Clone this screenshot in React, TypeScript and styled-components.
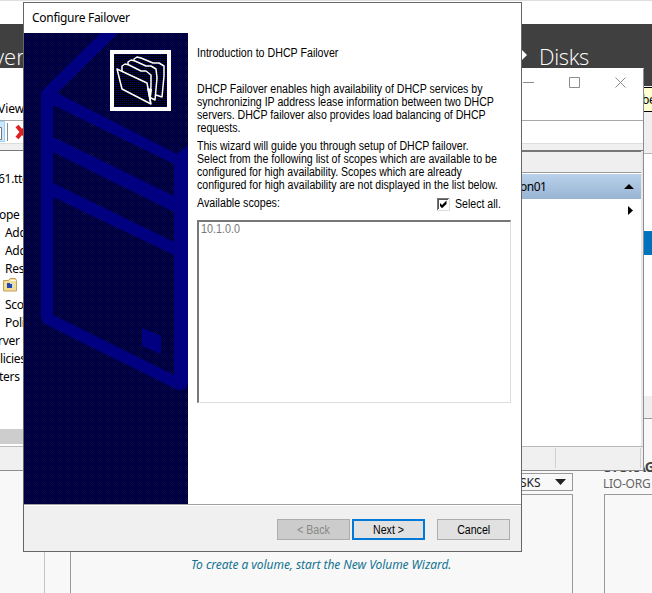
import React from "react";
import styled, { createGlobalStyle } from "styled-components";

const Global = createGlobalStyle`
  *{box-sizing:border-box}
  html,body{margin:0;padding:0;overflow:hidden}
  body{width:652px;height:593px;background:#f8f8f8;color:#000;font-family:"Noto Sans","Open Sans",sans-serif;font-size:12px}
`;

const Desktop = styled.main`
  position: relative;
  width: 652px;
  height: 593px;
  overflow: hidden;
`;

/* ---------- Server Manager behind ---------- */
const Manager = styled.section`
  display: flex;
  flex-direction: column;
  height: 593px;
`;
const ManagerCaption = styled.div`
  height: 24px;
  border-top: 1px solid #dedede;
  background: #fff;
`;
const Breadcrumb = styled.header`
  display: flex;
  height: 62px;
  padding-top: 13px;
  background: #404040;
  color: #fff;
  font: 300 22px/38px "Open Sans", sans-serif;
  white-space: nowrap;
`;
const CrumbLeft = styled.span`
  width: 527px;
  margin-left: -6px;
`;
const CrumbArrow = styled.svg`
  width: 7px;
  height: 10px;
  margin-top: 13px;
`;
const CrumbRight = styled.span`
  margin-left: 11px;
  letter-spacing: -0.35px;
`;
const TipStrip = styled.div`
  display: flex;
  justify-content: flex-end;
  height: 68px;
  background: #efefef;
  border-bottom: 1px solid #b5b5b5;
`;
const Tip = styled.span`
  width: 9px;
  height: 25px;
  margin-top: 1px;
  border: solid #000;
  border-width: 1px 0;
  background: #ffffd0;
  line-height: 24px;
  letter-spacing: -0.5px;
  text-indent: -1px;
  overflow: hidden;
`;
const TableArea = styled.div`
  display: flex;
  flex-direction: column;
  align-items: flex-end;
  height: 265px;
  background: #fff;
  border-bottom: 1px solid #999;
`;
const SelectedRow = styled.div`
  width: 30px;
  height: 24px;
  margin-top: 77px;
  background: #0072bc;
`;
const ScrollStrip = styled.div`
  width: 100%;
  height: 22px;
  margin-top: auto;
  background: #eee;
`;
const Tiles = styled.div`
  flex: 1;
  display: grid;
  grid-template-columns: 45px 25px 503px 31px 1fr;
  padding-top: 36px;
`;
const Gutter = styled.div`
  border-right: 1px solid #c4c4c4;
`;
const Tile = styled.div`
  display: flex;
  flex-direction: column;
`;
const TileHead = styled.div`
  display: flex;
  align-items: flex-end;
  justify-content: flex-end;
  height: 39px;
  padding-bottom: 3px;
`;
const TasksButton = styled.button`
  display: flex;
  align-items: center;
  justify-content: space-between;
  width: 80px;
  height: 18px;
  padding: 0 6px 0 26px;
  border: 1px solid #999;
  background: #f8f8f8;
  color: #222;
  font: 12px "Noto Sans", sans-serif;
`;
const Pane = styled.div`
  flex: 1;
  border: 1px solid #999;
  border-bottom: 0;
  padding: 61px 0 0 120px;
  color: #127391;
  font: italic 12px/18px "Noto Sans", sans-serif;
  letter-spacing: -0.05px;
  white-space: nowrap;
`;
const StorageTitle = styled.div`
  height: 19px;
  margin-top: 3px;
  color: #444;
  font: bold 14px/18px "Noto Sans", sans-serif;
  letter-spacing: -0.9px;
`;
const StorageSub = styled.div`
  height: 17px;
  margin-left: -1px;
  color: #666;
  line-height: 14px;
  letter-spacing: -0.25px;
  white-space: nowrap;
`;

/* ---------- DHCP console ---------- */
const Console = styled.section`
  position: absolute;
  left: -1px;
  top: 68px;
  width: 645px;
  height: 403px;
  display: flex;
  flex-direction: column;
  background: #fff;
  border: 1px solid #8d8d8d;
  border-top-color: #fff;
`;
const ConsoleCaption = styled.div`
  display: flex;
  align-items: center;
  gap: 35px;
  height: 27px;
  padding-left: 523px;
`;
const CaptionIcon = styled.svg`
  width: 11px;
  height: 11px;
  fill: none;
  stroke: #8b8b8b;
`;
const MenuBar = styled.div`
  height: 25px;
  padding-top: 1px;
  border-bottom: 1px solid #aaa;
  line-height: 24px;
  text-indent: -2px;
`;
const Toolbar = styled.div`
  display: flex;
  align-items: center;
  height: 23px;
  border-bottom: 1px solid #ddd;
`;
const ToolIcon = styled.svg`
  width: 24px;
  height: 22px;
`;
const ToolGap = styled.div`
  height: 7px;
  background: #f0f0f0;
  border-bottom: 1px solid #777;
`;
const ConsoleBody = styled.div`
  flex: 1;
  display: grid;
  grid-template-columns: 1fr 121px;
  border-right: 2px solid #e8e8e8;
`;
const Tree = styled.ul`
  list-style: none;
  margin: 0;
  padding: 19px 0 0;
`;
const TreeItem = styled.li<{ $shift: number }>`
  height: 18px;
  padding-left: ${(p) => Math.max(p.$shift, 0)}px;
  text-indent: ${(p) => Math.min(p.$shift, 0)}px;
  line-height: 18px;
  letter-spacing: -0.3px;
  white-space: pre;
`;
const TreeScroll = styled.div`
  height: 15px;
  margin-top: 43px;
  background: #cdcdcd;
`;
const Actions = styled.aside``;
const ActionsTitle = styled.div`
  height: 22px;
  background: #efefef;
  border-top: 1px solid #777;
  border-bottom: 1px solid #999;
`;
const ActionsGroup = styled.div`
  display: flex;
  align-items: center;
  justify-content: space-between;
  height: 25px;
  margin-top: 1px;
  padding: 0 7px 0 0;
  background: linear-gradient(#b9d1ea, #98b4d4);
  letter-spacing: -0.5px;
`;
const MoreArrow = styled.svg`
  display: block;
  width: 5px;
  height: 9px;
  margin: 7px 8px 0 auto;
`;
const StatusBar = styled.div`
  display: flex;
  height: 24px;
  border-top: 1px solid #bbb;
  background: #f0f0f0;
  padding: 1px 2px 2px 0;
`;
const StatusCell = styled.div<{ $w: number }>`
  width: ${(p) => p.$w}px;
  border-right: 1px solid #d0d0d0;
`;

/* ---------- Wizard ---------- */
const Wizard = styled.section`
  position: absolute;
  left: 23px;
  top: 2px;
  width: 499px;
  height: 550px;
  display: flex;
  flex-direction: column;
  border: 1px solid #666;
  background: #fff;
  font: 12px/13px "Liberation Sans", sans-serif;
`;
const WizardTitle = styled.h1`
  height: 30px;
  margin: 0;
  padding-left: 8px;
  font: 12px/30px "Noto Sans", sans-serif;
  letter-spacing: -0.29px;
`;
const WizardBody = styled.div`
  display: flex;
  height: 471px;
`;
const Watermark = styled.svg`
  width: 164px;
  height: 471px;
  flex: none;
`;
const Page = styled.div`
  width: 323px;
  padding: 14px 0 0 9px;
  white-space: nowrap;
`;
const Narrow = styled.span<{ $by?: number }>`
  display: inline-block;
  transform: scaleX(${(p) => p.$by ?? 0.882});
  transform-origin: left;
`;
const Line = styled(Narrow)<{ $gap?: number }>`
  display: block;
  width: max-content;
  height: 13px;
  margin-top: ${(p) => p.$gap ?? 0}px;
`;
const ScopeHead = styled.div`
  display: flex;
  height: 14px;
  margin-top: 5px;
`;
const ScopeLabel = styled.div`
  width: 240px;
`;
const CheckLabel = styled.label`
  display: flex;
  align-items: center;
  gap: 5px;
`;
const Tick = styled.svg`
  width: 13px;
  height: 13px;
`;
const ScopeList = styled.div`
  width: 314px;
  height: 183px;
  margin-top: 9px;
  padding: 1px 2px;
  border: solid;
  border-width: 2px 1px 1px 2px;
  border-color: #777 #ddd #ddd #777;
  color: #777;
`;
const WizardFooter = styled.footer`
  flex: 1;
  display: flex;
  align-items: flex-start;
  justify-content: flex-end;
  padding: 14px 11px 0 0;
  background: #f0f0f0;
  border-top: 1px solid #a0a0a0;
  box-shadow: inset 0 1px #fff;
`;
const Button = styled.button<{ $kind?: "default" | "off" }>`
  width: 73px;
  height: 21px;
  padding: 1px 0 0;
  margin-left: ${(p) => (p.$kind === "default" ? 2 : 12)}px;
  border: ${(p) => (p.$kind === "default" ? "2px solid #0078d7" : "1px solid #adadad")};
  background: ${(p) => (p.$kind === "off" ? "#ccc" : "#e1e1e1")};
  color: ${(p) => (p.$kind === "off" ? "#888" : "#000")};
  font: 12px "Liberation Sans", sans-serif;
`;
const ButtonText = styled(Narrow)`
  transform-origin: center;
`;

const tree = [
  { text: "61.tto", shift: -2 },
  { text: "", shift: 0 },
  { text: "ope [", shift: -1 },
  { text: "Add", shift: 5 },
  { text: "Add", shift: 5 },
  { text: "Res", shift: 5 },
  { text: "folder", shift: 3 },
  { text: "Sco", shift: 5 },
  { text: "Poli", shift: 5 },
  { text: "rver O", shift: -2 },
  { text: "licies", shift: 0 },
  { text: "ters", shift: -1 },
];

const FolderIcon = () => (
  <svg width="14" height="14" viewBox="0 0 14 14">
    <path d="M.5 2.500h5l1.500-2h5.500l1 2v10.500h-13z" fill="#f3dc94" stroke="#c2a057" />
    <path d="M7.500 2.500h5" stroke="#fff" />
    <path d="M4 5h6v5H4z" fill="#c3dcf8" />
    <path d="M4 5h3v5H4zM6 6h3v4H6z" fill="#2448b0" />
  </svg>
);

const checker = [0, 1, 2, 3, 4, 5, 6, 7].flatMap((y) =>
  [0, 2, 4, 6].map((x) => ({ x: x + ((y + 1) % 2), y })),
);

const WizardWatermark = () => (
  <Watermark viewBox="0 0 164 471">
    <defs>
      <pattern id="dither" width="8" height="8" patternUnits="userSpaceOnUse">
        <rect width="8" height="8" fill="#000" />
        {checker.map((c) => (
          <rect key={`${c.x}-${c.y}`} x={c.x} y={c.y} width="1" height="1" fill="#000084" />
        ))}
      </pattern>
      <pattern id="sparse" width="8" height="8" patternUnits="userSpaceOnUse">
        <rect width="8" height="8" fill="#000" />
        {checker.filter((c) => c.y % 2 === 1).map((c) => (
          <rect key={`${c.x}-${c.y}`} x={c.x} y={c.y} width="1" height="1" fill="#000084" />
        ))}
      </pattern>
    </defs>
    <rect width="164" height="471" fill="url(#dither)" />
    <path fill="#000080" d="M77 0h17L33 60 153 121l11-9v239q-3 7-10 6L21 291q-4-3-4-8V61q0-3 3-5z" />
    <path
      fill="url(#dither)"
      d="M29 72 150 131v32L29 104zM29 119 150 179v30L29 150zM29 164 150 222v120L29 282z"
    />
    <path fill="#000080" d="M118 295l19 8v18l-19-8z" />
    <path fill="#fff" d="M86 17h61v61H86z" />
    <path fill="url(#sparse)" d="M90 21h53v53H90z" />
    <g fill="url(#sparse)" stroke="#fff" strokeWidth="1.5" strokeLinejoin="round">
      <path d="M110 31v-5l3-2 4 1 12 5 6 0 5 3v10l-2 21-6-2" />
      <path d="M104 33v-4l3-2 4 1 11 5 5 0 5 3 1 9-2 22-6-3" />
      <path d="M98 38v-5l3-2 4 1 12 6 5 0 5 4v10l-1 18" />
      <path d="M93 36l30 14 4 21-29-15z" />
    </g>
    <path d="M123 55l5 1-2 15z" fill="#fff" />
  </Watermark>
);

export default function App() {
  return (
    <Desktop>
      <Global />
      <Manager>
        <ManagerCaption />
        <Breadcrumb>
          <CrumbLeft>ver</CrumbLeft>
          <CrumbArrow viewBox="0 0 7 10"><path d="M1 0l5 5-5 5z" fill="#fff" /></CrumbArrow>
          <CrumbRight>Disks</CrumbRight>
        </Breadcrumb>
        <TipStrip><Tip>be</Tip></TipStrip>
        <TableArea>
          <SelectedRow />
          <ScrollStrip />
        </TableArea>
        <Tiles>
          <Gutter />
          <div />
          <Tile>
            <TileHead>
              <TasksButton>
                SKS
                <svg width="11" height="6"><path d="M0 0h11L5.500 6z" fill="#222" /></svg>
              </TasksButton>
            </TileHead>
            <Pane>To create a volume, start the New Volume Wizard.</Pane>
          </Tile>
          <div />
          <Tile>
            <StorageTitle>STORAGE</StorageTitle>
            <StorageSub>LIO-ORG</StorageSub>
            <Pane />
          </Tile>
        </Tiles>
      </Manager>

      <Console>
        <ConsoleCaption>
          <CaptionIcon><path d="M0 5.500h11" /></CaptionIcon>
          <CaptionIcon><path d="M.5.5h10v10H.5z" /></CaptionIcon>
          <CaptionIcon><path d="M.5.5l10 10M10.500.5l-10 10" /></CaptionIcon>
        </ConsoleCaption>
        <MenuBar>View</MenuBar>
        <Toolbar>
          <ToolIcon viewBox="0 0 24 22">
            <path d="M-1 .5H4.500v20H-1" fill="#cce8ff" stroke="#99d1ff" />
            <path d="M-1 6.500H1.500v12H-1" fill="#fff" stroke="#777" />
            <path d="M7.500 2v18" stroke="#888" />
            <path d="M17 5l10 12M27 5L17 17" stroke="#e02020" strokeWidth="4" />
          </ToolIcon>
        </Toolbar>
        <ToolGap />
        <ConsoleBody>
          <div>
            <Tree>
              {tree.map((t, i) => (
                <TreeItem key={i} $shift={t.shift}>{t.text === "folder" ? <FolderIcon /> : t.text}</TreeItem>
              ))}
            </Tree>
            <TreeScroll />
          </div>
          <Actions>
            <ActionsTitle />
            <ActionsGroup>
              on01
              <svg width="10" height="5"><path d="M0 5h10L5 0z" /></svg>
            </ActionsGroup>
            <MoreArrow><path d="M0 0v9l5-4.500z" /></MoreArrow>
          </Actions>
        </ConsoleBody>
        <StatusBar>
          <StatusCell $w={556} />
          <StatusCell $w={85} />
        </StatusBar>
      </Console>

      <Wizard>
        <WizardTitle>Configure Failover</WizardTitle>
        <WizardBody>
          <WizardWatermark />
          <Page>
            <Line $by={0.888}>Introduction to DHCP Failover</Line>
            <Line $gap={23}>DHCP Failover enables high availability of DHCP services by</Line>
            <Line>synchronizing IP address lease information between two DHCP</Line>
            <Line>servers. DHCP failover also provides load balancing of DHCP</Line>
            <Line>requests.</Line>
            <Line $gap={5}>This wizard will guide you through setup of DHCP failover.</Line>
            <Line $by={0.885}>Select from the following list of scopes which are available to be</Line>
            <Line $by={0.879}>configured for high availability. Scopes which are already</Line>
            <Line>configured for high availability are not displayed in the list below.</Line>
            <ScopeHead>
              <ScopeLabel><Narrow $by={0.89}>Available scopes:</Narrow></ScopeLabel>
              <CheckLabel>
                <Tick viewBox="0 0 13 13">
                  <path d="M0 0h13v13H0z" fill="#ddd" />
                  <path d="M0 0h12v1H1v11H0z" fill="#777" />
                  <path d="M1 1h11v11H1z" fill="#fff" />
                  <path d="M1 1h10v1H2v9H1z" fill="#555" />
                  <path d="M3 5l2 2 4.500-4.500V6L5 10.200 3 8z" />
                </Tick>
                <Narrow>Select all.</Narrow>
              </CheckLabel>
            </ScopeHead>
            <ScopeList><Narrow $by={0.9}>10.1.0.0</Narrow></ScopeList>
          </Page>
        </WizardBody>
        <WizardFooter>
          <Button $kind="off"><ButtonText>&lt; Back</ButtonText></Button>
          <Button $kind="default"><ButtonText>Next &gt;</ButtonText></Button>
          <Button><ButtonText>Cancel</ButtonText></Button>
        </WizardFooter>
      </Wizard>
    </Desktop>
  );
}
